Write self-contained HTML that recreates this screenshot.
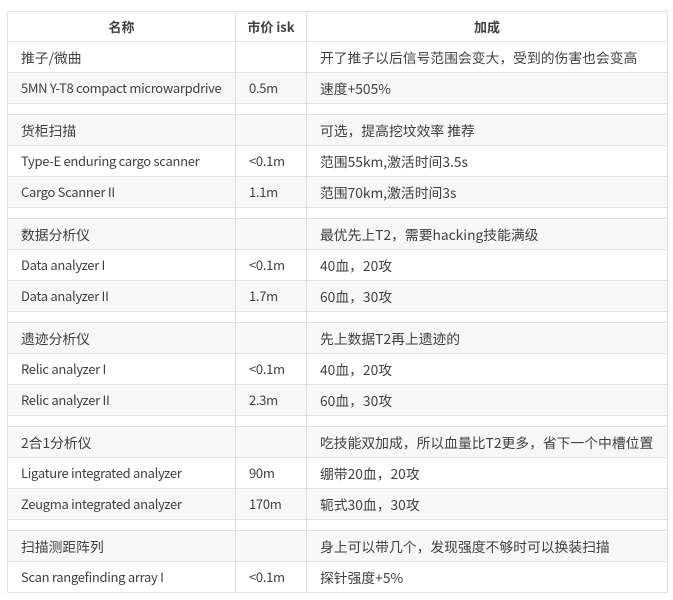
<!DOCTYPE html>
<html><head><meta charset="utf-8"><style>
html,body{margin:0;padding:0;background:#fff;width:673px;height:600px;overflow:hidden}
table{position:absolute;left:7px;top:11px;border-collapse:collapse;table-layout:fixed;width:660px;font-family:"Noto Sans CJK SC","Liberation Sans",sans-serif;font-size:13.8px;color:#404040}
td,th{border:1px solid #e1e1e1;padding:0 0 0 13px;height:30px;line-height:16px;white-space:nowrap;overflow:hidden}
td.l{font-size:13px;letter-spacing:-0.3px}
th{text-align:center;font-weight:bold;padding:0;background:#fff;height:29px;font-size:13px}
tr:nth-child(even) td{background:#f7f7f7}
tr.s td{height:10px;line-height:10px}
</style></head><body>
<table>
<colgroup><col style="width:228px"><col style="width:71px"><col style="width:361px"></colgroup>
<thead><tr><th>名称</th><th>市价 isk</th><th>加成</th></tr></thead>
<tbody>
<tr><td>推子/微曲</td><td></td><td>开了推子以后信号范围会变大，受到的伤害也会变高</td></tr>
<tr><td class="l">5MN Y-T8 compact microwarpdrive</td><td class="l">0.5m</td><td>速度+505%</td></tr>
<tr class="s"><td></td><td></td><td></td></tr>
<tr><td>货柜扫描</td><td></td><td>可选，提高挖坟效率 推荐</td></tr>
<tr><td class="l">Type-E enduring cargo scanner</td><td class="l">&lt;0.1m</td><td>范围55km,激活时间3.5s</td></tr>
<tr><td class="l">Cargo Scanner II</td><td class="l">1.1m</td><td>范围70km,激活时间3s</td></tr>
<tr class="s"><td></td><td></td><td></td></tr>
<tr><td>数据分析仪</td><td></td><td>最优先上T2，需要hacking技能满级</td></tr>
<tr><td class="l">Data analyzer I</td><td class="l">&lt;0.1m</td><td>40血，20攻</td></tr>
<tr><td class="l">Data analyzer II</td><td class="l">1.7m</td><td>60血，30攻</td></tr>
<tr class="s"><td></td><td></td><td></td></tr>
<tr><td>遗迹分析仪</td><td></td><td>先上数据T2再上遗迹的</td></tr>
<tr><td class="l">Relic analyzer I</td><td class="l">&lt;0.1m</td><td>40血，20攻</td></tr>
<tr><td class="l">Relic analyzer II</td><td class="l">2.3m</td><td>60血，30攻</td></tr>
<tr class="s"><td></td><td></td><td></td></tr>
<tr><td>2合1分析仪</td><td></td><td>吃技能双加成，所以血量比T2更多，省下一个中槽位置</td></tr>
<tr><td class="l">Ligature integrated analyzer</td><td class="l">90m</td><td>绷带20血，20攻</td></tr>
<tr><td class="l">Zeugma integrated analyzer</td><td class="l">170m</td><td>轭式30血，30攻</td></tr>
<tr class="s"><td></td><td></td><td></td></tr>
<tr><td>扫描测距阵列</td><td></td><td>身上可以带几个，发现强度不够时可以换装扫描</td></tr>
<tr><td class="l">Scan rangefinding array I</td><td class="l">&lt;0.1m</td><td>探针强度+5%</td></tr>
</tbody></table>
</body></html>
